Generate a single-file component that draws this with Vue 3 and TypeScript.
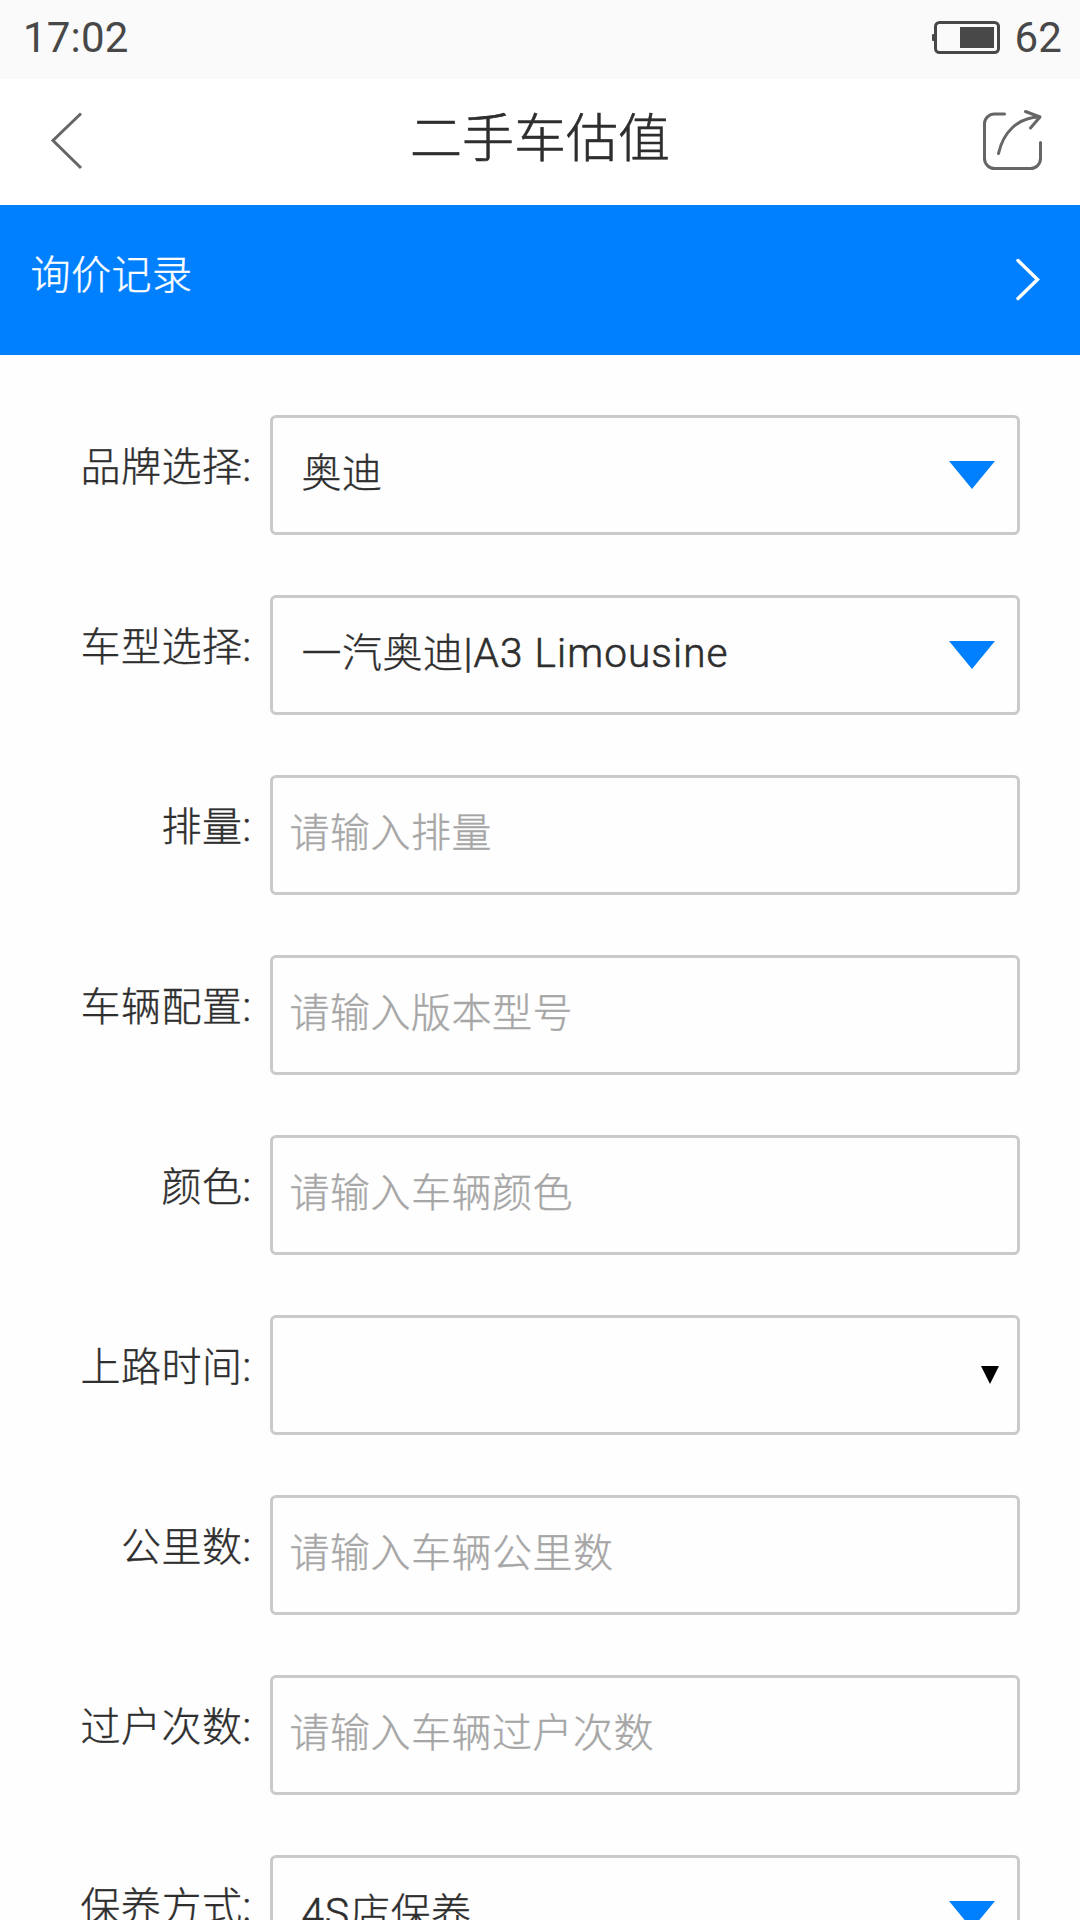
<script setup lang="ts">
interface Field {
  label: string
  kind: 'select' | 'input' | 'date'
  text: string
  latin?: string
  tail?: string
}

const fields: Field[] = [
  { label: '品牌选择', kind: 'select', text: '奥迪' },
  { label: '车型选择', kind: 'select', text: '一汽奥迪', latin: '|A3 Limousine' },
  { label: '排量', kind: 'input', text: '请输入排量' },
  { label: '车辆配置', kind: 'input', text: '请输入版本型号' },
  { label: '颜色', kind: 'input', text: '请输入车辆颜色' },
  { label: '上路时间', kind: 'date', text: '' },
  { label: '公里数', kind: 'input', text: '请输入车辆公里数' },
  { label: '过户次数', kind: 'input', text: '请输入车辆过户次数' },
  { label: '保养方式', kind: 'select', text: '', latin: '4S', tail: '店保养' },
]
</script>

<template>
  <div class="screen">
    <div class="status">
      <span class="clock">17:02</span>
      <svg class="battery" width="70" height="36" viewBox="0 0 70 36">
        <rect x="4.5" y="3.5" width="63" height="30" rx="4" fill="none" stroke="#484848" stroke-width="3" />
        <rect x="29" y="8" width="34" height="21" fill="#484848" />
        <rect x="1" y="15" width="3" height="7" rx="1" fill="#484848" />
      </svg>
      <span class="level">62</span>
    </div>

    <header class="nav">
      <svg class="back" width="40" height="64" viewBox="0 0 40 64">
        <path d="M36 4.500L8 31.500L36 59" fill="none" stroke="#666" stroke-width="3" />
      </svg>
      <h1>二手车估值</h1>
      <svg class="share" width="66" height="66" viewBox="0 0 66 66" fill="none" stroke="#666" stroke-width="3" stroke-linecap="round" stroke-linejoin="round">
        <path d="M24.500 8H14.500A10 10 0 0 0 4.500 18V52.500A10 10 0 0 0 14.500 62.500H50.500A10 10 0 0 0 60.500 52.500V36.500" />
        <path d="M18.500 47.500C23 27 37 11.500 59.500 11" />
        <path d="M45.500 5.500L60 11L50.500 22" />
      </svg>
    </header>

    <div class="record">
      <span>询价记录</span>
      <svg width="30" height="46" viewBox="0 0 30 46">
        <path d="M4 4.500L23.500 23.500L4 42.500" fill="none" stroke="#fff" stroke-width="3.400" stroke-linecap="round" />
      </svg>
    </div>

    <main class="form">
      <div v-for="f in fields" :key="f.label" class="row">
        <label>{{ f.label }}<span class="latin">:</span></label>
        <div class="field" :class="f.kind">
          <span class="text">{{ f.text }}<span v-if="f.latin" class="latin">{{ f.latin }}</span>{{ f.tail }}</span>
          <svg v-if="f.kind === 'select'" class="caret" width="46" height="28" viewBox="0 0 46 28">
            <path d="M0 0H46L23 28Z" fill="#007fff" />
          </svg>
          <svg v-if="f.kind === 'date'" class="caret" width="18" height="18" viewBox="0 0 18 18">
            <path d="M0 0H18L9 18Z" fill="#000" />
          </svg>
        </div>
      </div>
    </main>
  </div>
</template>

<style>
body {
  margin: 0;
  background: #fefefe;
}
</style>

<style scoped>
.screen {
  width: 1080px;
  height: 1920px;
  overflow: hidden;
  background: #fefefe;
  color: #2e2e2e;
  font-family: Roboto, "Noto Sans CJK SC", sans-serif;
  font-size: 40px;
  font-weight: 300;
  letter-spacing: 0.5px;
  white-space: nowrap;
  -webkit-text-stroke: 0.35px currentColor;
}
.latin {
  font-size: 40.5px;
  letter-spacing: 1.1px;
  -webkit-text-stroke: 0.6px currentColor;
}
.status {
  display: flex;
  height: 79px;
  box-sizing: border-box;
  padding: 0 18px 0 23px;
  background: #fafafa;
  color: #484848;
  font-size: 42px;
  font-weight: 400;
  line-height: 75px;
  letter-spacing: 0.2px;
  -webkit-text-stroke: 0;
}
.clock {
  flex: 1;
}
.battery {
  margin: 19px 13px 0 0;
}
.nav {
  display: flex;
  justify-content: space-between;
  height: 126px;
  box-sizing: border-box;
  padding: 0 34px 0 45px;
  background: #fff;
}
.back {
  margin-top: 30px;
  margin-right: 15px;
}
h1 {
  margin: 0;
  font-size: 52px;
  font-weight: inherit;
  line-height: 122px;
  letter-spacing: 0;
  -webkit-text-stroke: 0.6px currentColor;
}
.share {
  margin-top: 27px;
}
.record {
  display: flex;
  justify-content: space-between;
  height: 150px;
  box-sizing: border-box;
  padding: 0 36px 0 30.5px;
  background: #007fff;
  color: #fff;
  line-height: 141px;
}
.record svg {
  margin-top: 51px;
}
.form {
  display: flex;
  flex-direction: column;
  gap: 60px;
  padding: 60px 60px 0 0;
}
.row {
  display: flex;
  height: 120px;
}
label {
  width: 252px;
  margin-right: 18px;
  line-height: 105px;
  text-align: right;
}
.field {
  display: flex;
  flex: 1;
  justify-content: space-between;
  box-sizing: border-box;
  border: 3px solid #cacaca;
  border-radius: 6px;
  line-height: 111px;
}
.select {
  padding: 0 22px 0 28.5px;
}
.input {
  padding-left: 16.5px;
  color: #a6a6a6;
}
.date {
  padding-right: 18px;
}
.select .caret {
  margin-top: 43px;
}
.date .caret {
  margin-top: 48px;
}
</style>
